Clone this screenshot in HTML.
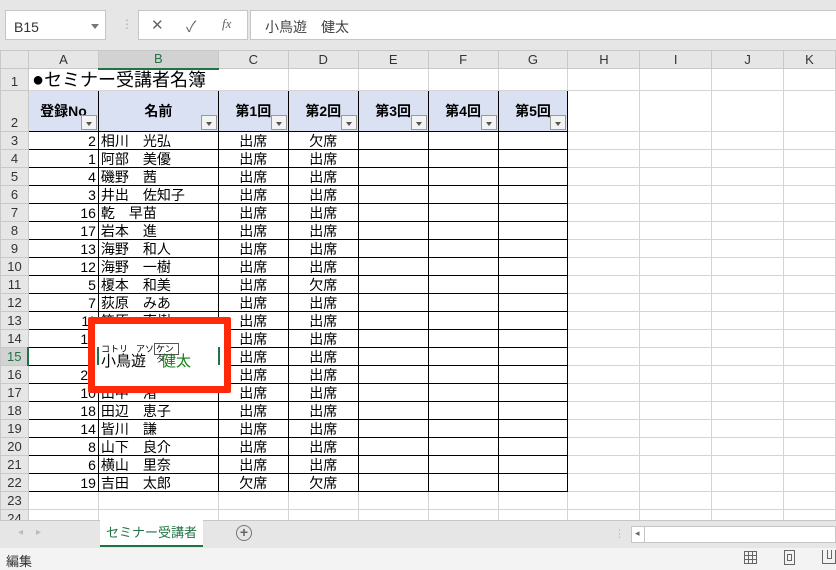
<!DOCTYPE html>
<html><head><meta charset="utf-8"><style>
*{margin:0;padding:0;box-sizing:border-box}
body{width:836px;height:570px;overflow:hidden;background:#fff;font-family:"Liberation Sans","Noto Sans CJK JP",sans-serif;position:relative}
.top{position:absolute;left:0;top:0;width:836px;height:50px;background:#e6e6e6}
.box{position:absolute;background:#fff;border:1px solid #c6c6c6}
table{position:absolute;left:0;top:50px;border-collapse:collapse;table-layout:fixed}
td{border:1px solid #d4d4d4;font-size:14px;height:18px;line-height:16px;padding:0 2px;white-space:nowrap;overflow:hidden;color:#000}
td.h{background:#e6e6e6;color:#333;text-align:center;font-size:13px;border-color:#c8c8c8}
tr.ch td{height:18px}
td.hs{background:#d2d2d2;border-bottom:2px solid #217346;color:#217346}
td.rs{background:#d2d2d2;color:#217346;border-right:2px solid #217346}
td.b{border:1px solid #000}
td.r{text-align:right}
td.c{text-align:center}
td.hd{background:#d9e1f2;border:1px solid #000;font-weight:bold;text-align:center;position:relative;font-size:14px}
.dd{position:absolute;right:1px;bottom:1px;width:16px;height:15px;background:#f3f3f3;border:1px solid #999}
.dd:after{content:"";position:absolute;left:4px;top:6px;border:3px solid transparent;border-top:4px solid #555}
</style></head><body>
<div class="top"></div>
<div class="box" style="left:5px;top:10px;width:101px;height:30px;font-size:14px;color:#333;padding:8px 0 0 8px">B15<span style="position:absolute;right:6px;top:13px;border:4px solid transparent;border-top:5px solid #777"></span></div>
<div style="position:absolute;left:121px;top:17px;color:#aaa;font-size:12px">⋮</div>
<div class="box" style="left:138px;top:10px;width:110px;height:30px;color:#666;font-size:15px"><span style="position:absolute;left:12px;top:5px">✕</span><span style="position:absolute;left:47px;top:5px">✓</span><span style="position:absolute;left:83px;top:5px;font-style:italic;font-family:'Liberation Serif',serif;font-size:13px">fx</span></div>
<div class="box" style="left:250px;top:10px;width:600px;height:30px;font-size:14px;color:#444;padding:6px 0 0 14px">小鳥遊　健太</div>
<table>
<colgroup><col style="width:28px"><col style="width:70px"><col style="width:120px"><col style="width:70px"><col style="width:70px"><col style="width:70px"><col style="width:70px"><col style="width:70px"><col style="width:72px"><col style="width:72px"><col style="width:72px"><col style="width:52px"></colgroup>
<tr class="ch"><td class="h"></td><td class="h">A</td><td class="h hs">B</td><td class="h">C</td><td class="h">D</td><td class="h">E</td><td class="h">F</td><td class="h">G</td><td class="h">H</td><td class="h">I</td><td class="h">J</td><td class="h">K</td></tr>
<tr><td class="h" style="height:22px;vertical-align:bottom">1</td><td colspan="3" style="font-size:18px;border-right:none;padding-left:3px"><span style="font-size:20px">●</span>セミナー受講者名簿</td><td></td><td></td><td></td><td></td><td></td><td></td><td></td><td></td></tr>
<tr><td class="h" style="height:41px;vertical-align:bottom">2</td><td class="hd">登録No<span class="dd"></span></td><td class="hd">名前<span class="dd"></span></td><td class="hd">第1回<span class="dd"></span></td><td class="hd">第2回<span class="dd"></span></td><td class="hd">第3回<span class="dd"></span></td><td class="hd">第4回<span class="dd"></span></td><td class="hd">第5回<span class="dd"></span></td><td></td><td></td><td></td><td></td></tr>
<tr><td class="h">3</td><td class="b r">2</td><td class="b">相川　光弘</td><td class="b c">出席</td><td class="b c">欠席</td><td class="b"></td><td class="b"></td><td class="b"></td><td></td><td></td><td></td><td></td></tr>
<tr><td class="h">4</td><td class="b r">1</td><td class="b">阿部　美優</td><td class="b c">出席</td><td class="b c">出席</td><td class="b"></td><td class="b"></td><td class="b"></td><td></td><td></td><td></td><td></td></tr>
<tr><td class="h">5</td><td class="b r">4</td><td class="b">磯野　茜</td><td class="b c">出席</td><td class="b c">出席</td><td class="b"></td><td class="b"></td><td class="b"></td><td></td><td></td><td></td><td></td></tr>
<tr><td class="h">6</td><td class="b r">3</td><td class="b">井出　佐知子</td><td class="b c">出席</td><td class="b c">出席</td><td class="b"></td><td class="b"></td><td class="b"></td><td></td><td></td><td></td><td></td></tr>
<tr><td class="h">7</td><td class="b r">16</td><td class="b">乾　早苗</td><td class="b c">出席</td><td class="b c">出席</td><td class="b"></td><td class="b"></td><td class="b"></td><td></td><td></td><td></td><td></td></tr>
<tr><td class="h">8</td><td class="b r">17</td><td class="b">岩本　進</td><td class="b c">出席</td><td class="b c">出席</td><td class="b"></td><td class="b"></td><td class="b"></td><td></td><td></td><td></td><td></td></tr>
<tr><td class="h">9</td><td class="b r">13</td><td class="b">海野　和人</td><td class="b c">出席</td><td class="b c">出席</td><td class="b"></td><td class="b"></td><td class="b"></td><td></td><td></td><td></td><td></td></tr>
<tr><td class="h">10</td><td class="b r">12</td><td class="b">海野　一樹</td><td class="b c">出席</td><td class="b c">出席</td><td class="b"></td><td class="b"></td><td class="b"></td><td></td><td></td><td></td><td></td></tr>
<tr><td class="h">11</td><td class="b r">5</td><td class="b">榎本　和美</td><td class="b c">出席</td><td class="b c">欠席</td><td class="b"></td><td class="b"></td><td class="b"></td><td></td><td></td><td></td><td></td></tr>
<tr><td class="h">12</td><td class="b r">7</td><td class="b">荻原　みあ</td><td class="b c">出席</td><td class="b c">出席</td><td class="b"></td><td class="b"></td><td class="b"></td><td></td><td></td><td></td><td></td></tr>
<tr><td class="h">13</td><td class="b r">11</td><td class="b">笠原　直樹</td><td class="b c">出席</td><td class="b c">出席</td><td class="b"></td><td class="b"></td><td class="b"></td><td></td><td></td><td></td><td></td></tr>
<tr><td class="h">14</td><td class="b r">15</td><td class="b"></td><td class="b c">出席</td><td class="b c">出席</td><td class="b"></td><td class="b"></td><td class="b"></td><td></td><td></td><td></td><td></td></tr>
<tr><td class="h rs">15</td><td class="b r">9</td><td class="b"></td><td class="b c">出席</td><td class="b c">出席</td><td class="b"></td><td class="b"></td><td class="b"></td><td></td><td></td><td></td><td></td></tr>
<tr><td class="h">16</td><td class="b r">20</td><td class="b"></td><td class="b c">出席</td><td class="b c">出席</td><td class="b"></td><td class="b"></td><td class="b"></td><td></td><td></td><td></td><td></td></tr>
<tr><td class="h">17</td><td class="b r">10</td><td class="b">山中　渚</td><td class="b c">出席</td><td class="b c">出席</td><td class="b"></td><td class="b"></td><td class="b"></td><td></td><td></td><td></td><td></td></tr>
<tr><td class="h">18</td><td class="b r">18</td><td class="b">田辺　恵子</td><td class="b c">出席</td><td class="b c">出席</td><td class="b"></td><td class="b"></td><td class="b"></td><td></td><td></td><td></td><td></td></tr>
<tr><td class="h">19</td><td class="b r">14</td><td class="b">皆川　謙</td><td class="b c">出席</td><td class="b c">出席</td><td class="b"></td><td class="b"></td><td class="b"></td><td></td><td></td><td></td><td></td></tr>
<tr><td class="h">20</td><td class="b r">8</td><td class="b">山下　良介</td><td class="b c">出席</td><td class="b c">出席</td><td class="b"></td><td class="b"></td><td class="b"></td><td></td><td></td><td></td><td></td></tr>
<tr><td class="h">21</td><td class="b r">6</td><td class="b">横山　里奈</td><td class="b c">出席</td><td class="b c">出席</td><td class="b"></td><td class="b"></td><td class="b"></td><td></td><td></td><td></td><td></td></tr>
<tr><td class="h">22</td><td class="b r">19</td><td class="b">吉田　太郎</td><td class="b c">欠席</td><td class="b c">欠席</td><td class="b"></td><td class="b"></td><td class="b"></td><td></td><td></td><td></td><td></td></tr>
<tr><td class="h">23</td><td></td><td></td><td></td><td></td><td></td><td></td><td></td><td></td><td></td><td></td><td></td></tr>
<tr><td class="h">24</td><td></td><td></td><td></td><td></td><td></td><td></td><td></td><td></td><td></td><td></td><td></td></tr>
</table>
<!-- edit overlay -->
<div style="position:absolute;left:88px;top:317px;width:143px;height:76px;border:7px solid #ff2a0a;border-radius:2px;background:#fff"></div>
<div style="position:absolute;left:97px;top:347px;width:2px;height:18px;background:#217346"></div>
<div style="position:absolute;left:218px;top:347px;width:2px;height:18px;background:#217346"></div>
<div style="position:absolute;left:101px;top:344px;font-size:9px;line-height:10px;color:#000">コトリ<span style="margin-left:8px">アソ</span></div>
<div style="position:absolute;left:154px;top:343px;width:25px;height:12px;border:1px solid #555;font-size:9px;line-height:10px;padding-left:1px;background:#fff">ケンタ</div>
<div style="position:absolute;left:101px;top:353px;font-size:15px;line-height:18px">小鳥遊　<span style="color:#108010">健太</span></div>
<!-- tabs -->
<div style="position:absolute;left:0;top:520px;width:836px;height:28px;background:#e6e6e6;border-top:1px solid #c6c6c6"></div>
<div style="position:absolute;left:18px;top:527px;color:#bbb;font-size:10px">◂</div>
<div style="position:absolute;left:36px;top:527px;color:#bbb;font-size:10px">▸</div>
<div style="position:absolute;left:100px;top:520px;width:103px;height:27px;background:#fff;border-bottom:2px solid #217346;color:#217346;font-size:13px;text-align:center;line-height:26px">セミナー受講者</div>
<div style="position:absolute;left:236px;top:525px;width:16px;height:16px;border:1.5px solid #777;border-radius:50%;color:#666;font-size:14px;line-height:13px;text-align:center;font-weight:bold">+</div>
<div style="position:absolute;left:614px;top:527px;color:#bbb;font-size:11px">⋮</div>
<div style="position:absolute;left:631px;top:526px;width:205px;height:17px;background:#fff;border:1px solid #c6c6c6"><span style="position:absolute;left:3px;top:1px;font-size:9px;color:#666">◂</span><span style="position:absolute;left:12px;top:0;width:1px;height:15px;background:#c6c6c6"></span></div>
<div style="position:absolute;left:0;top:548px;width:836px;height:22px;background:#f3f3f3"></div>
<div style="position:absolute;left:6px;top:551px;font-size:13px;color:#333">編集</div>
<div style="position:absolute;left:744px;top:551px;width:13px;height:13px;border:1px solid #666;background:linear-gradient(#666,#666) 3px 0/1px 100% no-repeat,linear-gradient(#666,#666) 7px 0/1px 100% no-repeat,linear-gradient(#666,#666) 0 3px/100% 1px no-repeat,linear-gradient(#666,#666) 0 7px/100% 1px no-repeat"></div>
<div style="position:absolute;left:784px;top:550px;width:11px;height:15px;border:1px solid #666"><div style="margin:3px 2px;height:7px;border:1px solid #666"></div></div>
<div style="position:absolute;left:822px;top:550px;width:14px;height:14px;border:1px solid #666;border-top:none"><div style="margin-left:4px;width:5px;height:9px;border:1px solid #666;border-top:none"></div></div>
</body></html>
